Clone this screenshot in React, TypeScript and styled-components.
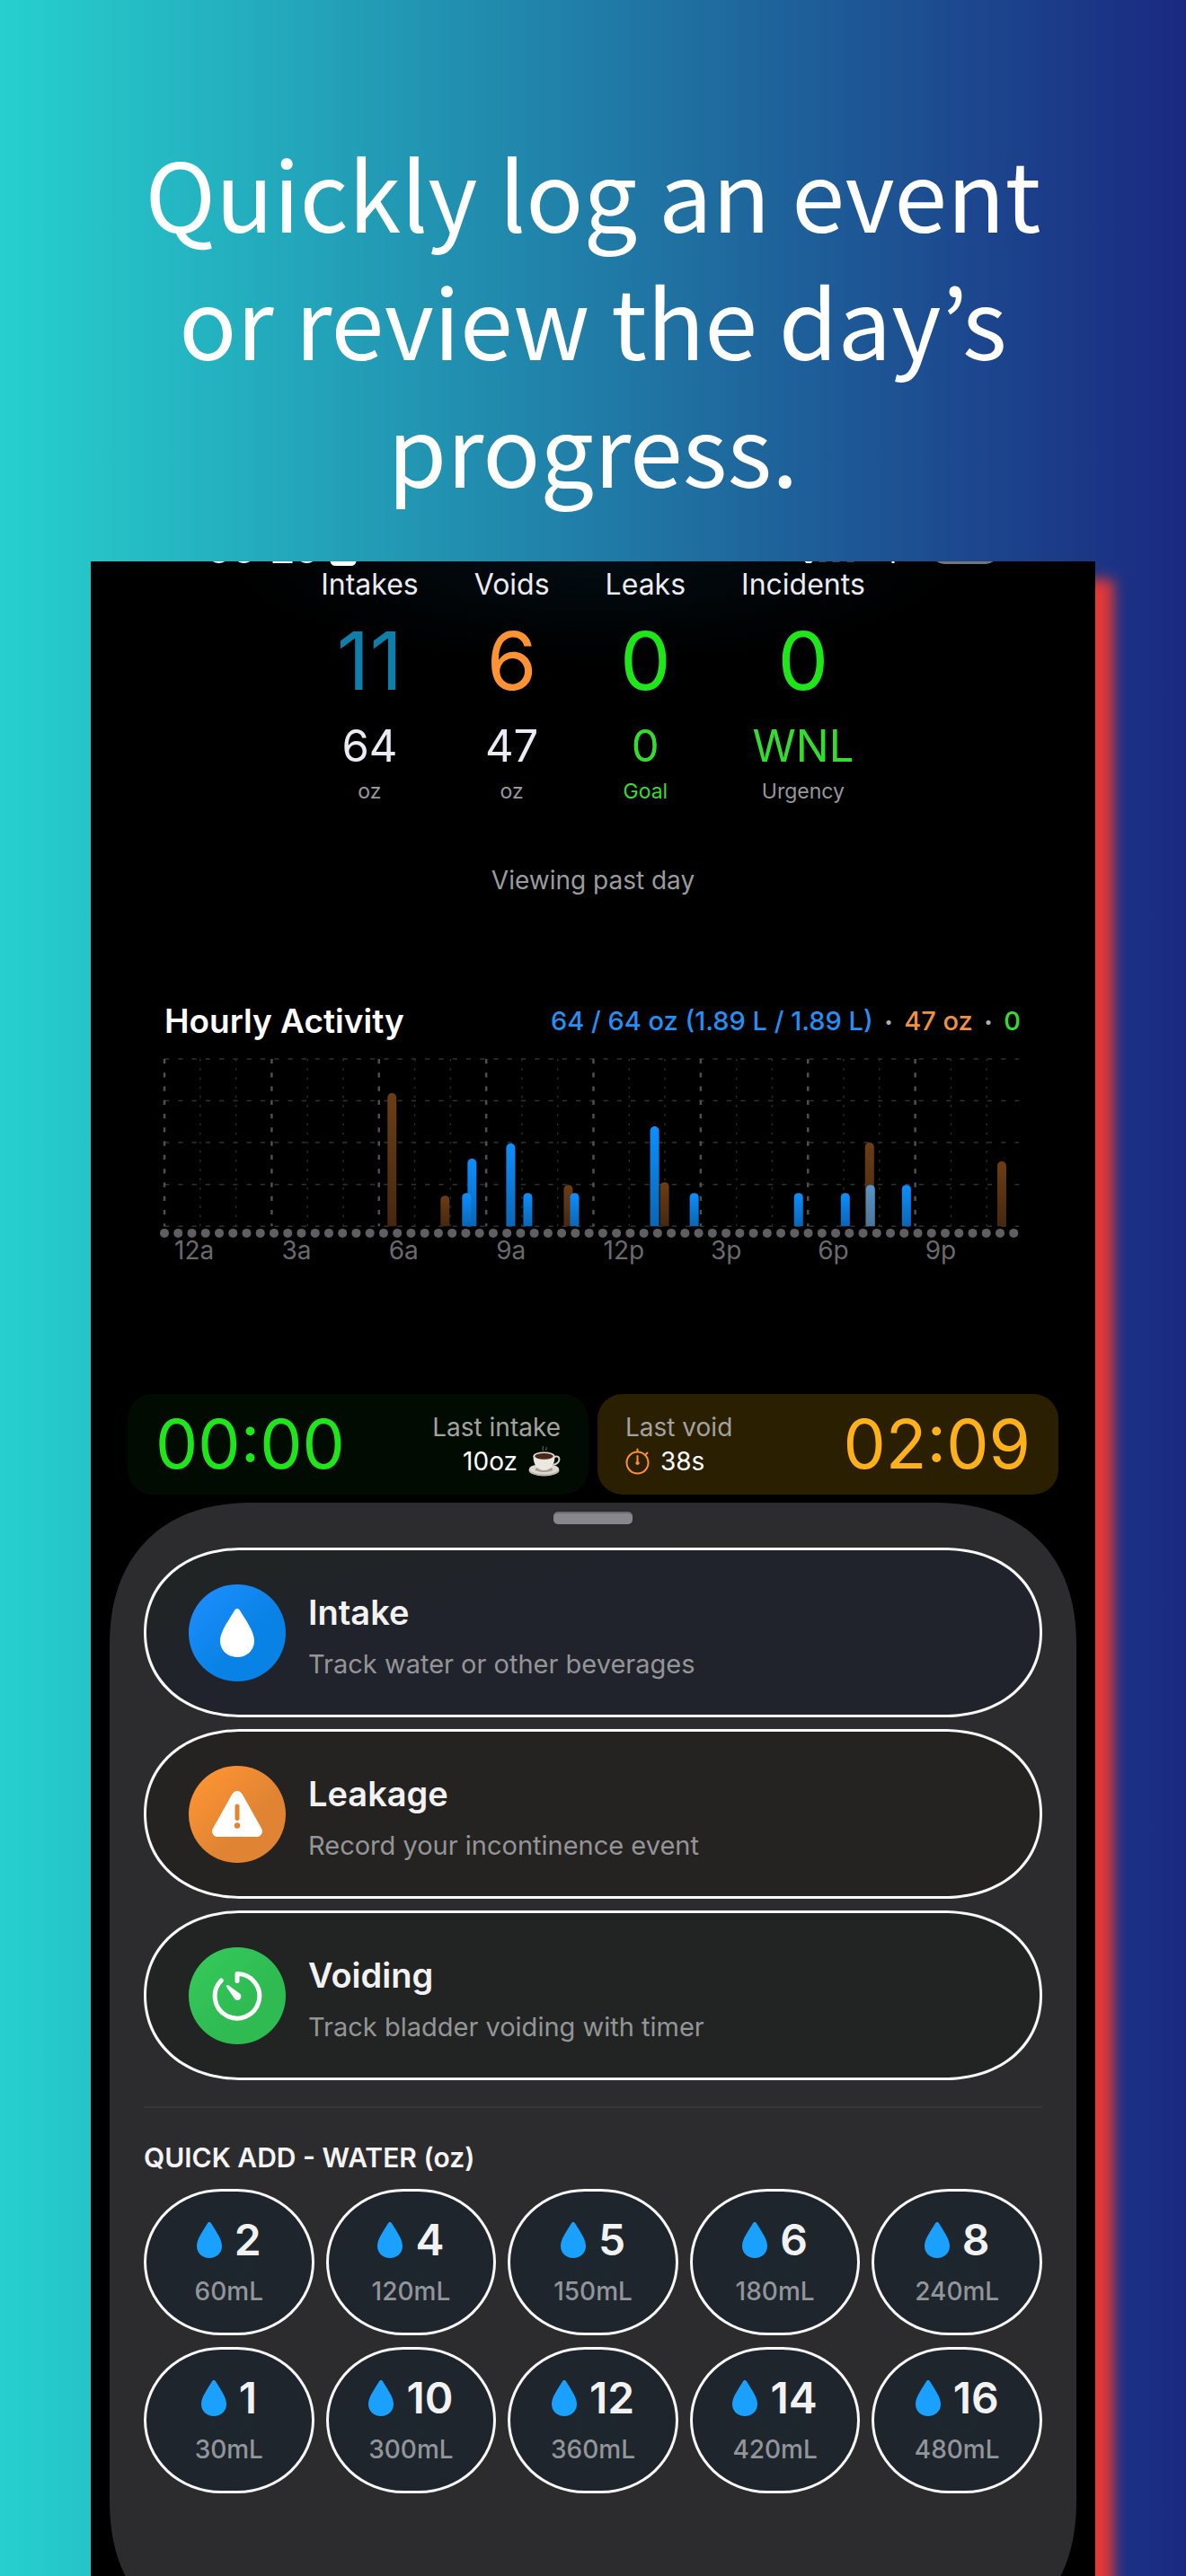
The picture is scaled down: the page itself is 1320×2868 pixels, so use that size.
import React from "react";
import styled, { createGlobalStyle } from "styled-components";

const GlobalStyle = createGlobalStyle`
  *, *::before, *::after { box-sizing: border-box; }
  body { margin: 0; background: #1a2980; }
  button { font: inherit; color: inherit; }
  h1, h2, h3, p { margin: 0; font-weight: inherit; }
`;

const Page = styled.main`
  height: 100vh;
  overflow: hidden;
  padding: 142px 101px 0;
  background: linear-gradient(90deg, #26d0ce, #1a2980);
  font-family: Inter, "Liberation Sans", sans-serif;
  color: #fff;
`;

const Headline = styled.h1`
  padding: 0 40px;
  margin-bottom: 57px;
  text-align: center;
  font-family: "Noto Sans CJK JP", "Noto Sans", sans-serif;
  font-size: 106px;
  font-weight: 400;
  line-height: 142px;
`;

const Phone = styled.section`
  background: radial-gradient(ellipse 400px 110px at 50% 0, #020c12, #000);
  box-shadow: 20px 20px 14px #e53935;
`;

const StatusStrip = styled.svg`
  display: block;
  width: 100%;
  height: 7px;
`;

const Stats = styled.div`
  display: flex;
  justify-content: center;
  gap: 62px;
`;

const Stat = styled.div`
  display: flex;
  flex-direction: column;
  align-items: center;
`;

const StatName = styled.h3`
  font-size: 32px;
  line-height: 38px;
  color: #ebebf2;
`;

const StatCount = styled.p<{ $color: string }>`
  margin: 16px 0 14px;
  font-size: 90px;
  font-weight: 400;
  line-height: 100px;
  color: ${(p) => p.$color};
`;

const StatTotal = styled.p<{ $color: string }>`
  font-size: 49px;
  font-weight: 400;
  line-height: 62px;
  color: ${(p) => p.$color};
`;

const StatUnit = styled.p<{ $color: string }>`
  margin-top: 4px;
  font-size: 23px;
  line-height: 30px;
  color: ${(p) => p.$color};
`;

const Viewing = styled.p`
  margin-top: 66px;
  text-align: center;
  font-size: 28px;
  line-height: 36px;
  color: #9b9b9f;
`;

const Activity = styled.section`
  padding: 0 81px 0 82px;
  margin-top: 117px;
`;

const ActivityHeader = styled.header`
  display: flex;
  align-items: center;
  justify-content: space-between;
  padding-right: 2px;
  margin-bottom: 18px;
`;

const ActivityTitle = styled.h2`
  font-size: 37px;
  font-weight: 600;
  line-height: 44px;
`;

const Summary = styled.p`
  display: flex;
  align-items: center;
  gap: 13px;
  font-size: 29px;
  font-weight: 500;
  line-height: 44px;
`;

const Tint = styled.span<{ $color: string }>`
  color: ${(p) => p.$color};
`;

const Dot = styled.span`
  font-size: 16px;
  color: #b0b0b4;
`;

const Chart = styled.svg`
  display: block;
  width: 100%;
  overflow: visible;
`;

const Hours = styled.div`
  display: grid;
  grid-template-columns: repeat(8, 1fr);
  font-size: 28px;
  line-height: 30px;
  color: #6a6a6e;
`;

const Hour = styled.span`
  padding-left: 11px;
`;

const Timers = styled.div`
  display: grid;
  grid-template-columns: 1fr 1fr;
  gap: 10px;
  padding: 0 41px;
  margin: 145px 0 9px;
`;

const TimerCard = styled.div<{ $bg: string }>`
  display: flex;
  align-items: center;
  justify-content: space-between;
  height: 112px;
  padding: 0 31px;
  border-radius: 28px;
  background: ${(p) => p.$bg};
`;

const Clock = styled.time<{ $color: string }>`
  font-size: 75px;
  font-weight: 400;
  line-height: 84px;
  color: ${(p) => p.$color};
`;

const TimerInfo = styled.div<{ $align: string }>`
  display: flex;
  flex-direction: column;
  align-items: ${(p) => p.$align};
  font-size: 28px;
  line-height: 38px;
`;

const TimerLabel = styled.span`
  color: #a3a29f;
`;

const TimerValue = styled.span`
  display: flex;
  align-items: center;
  gap: 12px;
`;

const Sheet = styled.section`
  margin: 0 21px;
  padding: 10px 38px 167px;
  border-radius: 150px;
  background: #2c2c2e;
  @supports (corner-shape: superellipse(1.2)) {
    border-radius: 160px;
    corner-shape: superellipse(1.2);
  }
`;

const Handle = styled.div`
  width: 88px;
  height: 14px;
  margin: 0 auto 26px;
  border-top: 2px solid #6c6b72;
  border-radius: 5px;
  background: #88878d;
`;

const Actions = styled.div`
  display: grid;
  gap: 13px;
`;

const ActionButton = styled.button<{ $bg: string }>`
  display: flex;
  align-items: center;
  gap: 25px;
  height: 189px;
  padding: 0 47px;
  border: 3px solid #f8f8f8;
  border-radius: 100px / 50%;
  background: ${(p) => p.$bg};
  text-align: left;
  @supports (corner-shape: superellipse(1.1)) {
    border-radius: 110px / 50%;
    corner-shape: superellipse(1.1);
  }
`;

const ActionIcon = styled.span<{ $from: string; $to: string }>`
  display: grid;
  place-items: center;
  width: 108px;
  height: 108px;
  border-radius: 50%;
  background: linear-gradient(135deg, ${(p) => p.$from} 15%, ${(p) => p.$to} 60%);
`;

const ActionText = styled.span`
  display: grid;
  gap: 15px;
  padding-top: 6px;
`;

const ActionTitle = styled.span`
  font-size: 38px;
  font-weight: 600;
  line-height: 50px;
  color: #f2f2f2;
`;

const ActionHint = styled.span`
  font-size: 29px;
  line-height: 36px;
  color: #949597;
`;

const Divider = styled.hr`
  height: 2px;
  margin: 29px 0 37px;
  border: 0;
  background: #363638;
`;

const QuickTitle = styled.h2`
  margin-bottom: 17px;
  font-size: 30px;
  font-weight: 600;
  line-height: 36px;
  color: #f4f4f4;
`;

const QuickGrid = styled.div`
  display: grid;
  grid-template-columns: repeat(5, 1fr);
  gap: 13px;
`;

const QuickButton = styled.button`
  display: flex;
  flex-direction: column;
  align-items: center;
  justify-content: center;
  gap: 15px;
  height: 163px;
  padding: 0;
  border: 3px solid #f8f8f8;
  border-radius: 86px / 50%;
  background: radial-gradient(circle, #1d262e, #20242b);
`;

const QuickAmount = styled.span`
  display: flex;
  align-items: center;
  gap: 14px;
  font-size: 48px;
  font-weight: 600;
  line-height: 50px;
  color: #f2f2f2;
`;

const QuickMetric = styled.span`
  font-size: 28px;
  font-weight: 500;
  line-height: 34px;
  color: #92959a;
`;

const GREEN = "#1ee61a";
const SOFT_GREEN = "#35dc30";
const GREY = "#98989c";

const stats = [
  { name: "Intakes", count: "11", color: "#0e7fab", total: "64", totalColor: "#ebebf5", unit: "oz", unitColor: GREY },
  { name: "Voids", count: "6", color: "#ff9233", total: "47", totalColor: "#ebebf5", unit: "oz", unitColor: GREY },
  { name: "Leaks", count: "0", color: GREEN, total: "0", totalColor: SOFT_GREEN, unit: "Goal", unitColor: SOFT_GREEN },
  { name: "Incidents", count: "0", color: GREEN, total: "WNL", totalColor: SOFT_GREEN, unit: "Urgency", unitColor: GREY },
];

type BarKind = "void" | "intake" | "mixed";
const bars: { x: number; h: number; kind: BarKind }[] = [
  { x: 253, h: 148, kind: "void" },
  { x: 312, h: 34, kind: "void" },
  { x: 342, h: 75, kind: "intake" },
  { x: 336, h: 37, kind: "intake" },
  { x: 385, h: 92, kind: "intake" },
  { x: 404, h: 37, kind: "intake" },
  { x: 449, h: 46, kind: "void" },
  { x: 456, h: 37, kind: "intake" },
  { x: 545, h: 111, kind: "intake" },
  { x: 556, h: 49, kind: "void" },
  { x: 589, h: 37, kind: "intake" },
  { x: 705, h: 37, kind: "intake" },
  { x: 757, h: 37, kind: "intake" },
  { x: 784, h: 93, kind: "void" },
  { x: 785, h: 46, kind: "mixed" },
  { x: 825, h: 46, kind: "intake" },
  { x: 931, h: 72, kind: "void" },
];

const BASE = 188;
const barPath = (x: number, h: number) =>
  `M${x - 5} ${BASE}V${BASE - h + 5}a5 5 0 0 1 10 0V${BASE}z`;

const hours = ["12a", "3a", "6a", "9a", "12p", "3p", "6p", "9p"];

const quick = [
  ["2", "60mL"], ["4", "120mL"], ["5", "150mL"], ["6", "180mL"], ["8", "240mL"],
  ["1", "30mL"], ["10", "300mL"], ["12", "360mL"], ["14", "420mL"], ["16", "480mL"],
];

function Drop({ width, height, color }: { width: number; height: number; color: string }) {
  return (
    <svg width={width} height={height} viewBox="0 0 28 40" preserveAspectRatio="none" aria-hidden="true">
      <path d="M14 0c1 0 1.700.6 2.300 1.700C20.500 9 28 18.500 28 26.500 28 34.500 22 40 14 40S0 34.500 0 26.500C0 18.500 7.500 9 11.700 1.700 12.300.6 13 0 14 0z" fill={color} />
    </svg>
  );
}

function Warning() {
  return (
    <svg width="56" height="51" viewBox="0 0 56 51" aria-hidden="true">
      <path d="M22.500 3.200a6.300 6.300 0 0 1 11 0l21.600 38.600c2.300 4.300-.6 9.200-5.500 9.200H6.400C1.500 51-1.400 46.100.9 41.800z" fill="#fff" />
      <path d="M28 17v13.500" stroke="#e28634" strokeWidth="5" strokeLinecap="round" />
      <circle cx="28" cy="38.500" r="3.200" fill="#e28634" />
    </svg>
  );
}

function TimerDial() {
  return (
    <svg width="56" height="56" viewBox="0 0 56 56" fill="none" aria-hidden="true">
      <path d="M28 11.500V3.500A24.800 24.800 0 1 1 10.200 11" stroke="#fff" strokeWidth="5" strokeLinecap="round" strokeLinejoin="round" />
      <path d="M16.300 16.300c.8-.7 1.500-.4 2.200.1l12.300 9.200a4.100 4.100 0 1 1-5.800 5.700L16.200 18.300c-.5-.7-.6-1.400.1-2z" fill="#fff" />
    </svg>
  );
}

function Stopwatch() {
  return (
    <svg width="27" height="30" viewBox="0 0 27 30" fill="none" stroke="#ff8f35" strokeWidth="2" strokeLinecap="round" aria-hidden="true">
      <circle cx="13.500" cy="16.500" r="12" />
      <path d="M13.500 4V1.500M23 7l1.500-1.500M13.500 9v8" />
      <circle cx="13.500" cy="17" r="1.600" fill="#ff8f35" strokeWidth="1" />
    </svg>
  );
}

function Coffee() {
  return (
    <svg width="36" height="34" viewBox="0 0 36 34" aria-hidden="true">
      <path d="M17 5c-3-2 1-2-1-5M20 5c-1-2 1-2 0-4" stroke="#55585a" strokeWidth="1.200" fill="none" />
      <ellipse cx="17.500" cy="27" rx="17" ry="6.500" fill="#bdb9af" />
      <ellipse cx="17.500" cy="25.500" rx="16.500" ry="5.500" fill="#dedad1" />
      <ellipse cx="17.500" cy="26" rx="10" ry="3" fill="#a39e94" />
      <path d="M29 12c7-3 8 7-1.500 9" stroke="#d6d2c9" strokeWidth="2" fill="none" />
      <path d="M5.500 11c0 9 4 16 12 16s12-7 12-16z" fill="#ebe8e1" />
      <ellipse cx="17.500" cy="11" rx="12" ry="4.500" fill="#e4e0d8" />
      <ellipse cx="17.500" cy="11.300" rx="10.300" ry="3.400" fill="#4a2519" />
    </svg>
  );
}

function ActivityChart() {
  return (
    <Chart viewBox="0 0 954 200" role="img" aria-label="Hourly activity bars">
      <defs>
        <linearGradient id="void" x1="0" y1="0" x2="0" y2="1">
          <stop offset="0" stopColor="#6c3d15" />
          <stop offset="1" stopColor="#46280f" />
        </linearGradient>
        <linearGradient id="intake" x1="0" y1="0" x2="0" y2="1">
          <stop offset="0" stopColor="#0d8fff" />
          <stop offset="1" stopColor="#0a66b5" />
        </linearGradient>
        <linearGradient id="mixed" x1="0" y1="0" x2="0" y2="1">
          <stop offset="0" stopColor="#5795c8" />
          <stop offset="1" stopColor="#4c7697" />
        </linearGradient>
      </defs>
      {[0, 1, 2, 3, 4].map((i) => (
        <path key={i} d={`M0 ${2 + i * 46.5}H950`} stroke="#303032" strokeWidth="1.500" strokeDasharray="5.250 10" />
      ))}
      {Array.from({ length: 24 }, (_, i) => {
        const major = i % 3 === 0;
        return (
          <path
            key={i}
            d={`M${i * 39.75} 2V${BASE}`}
            stroke={major ? "#4f4f52" : "#29292b"}
            strokeWidth={major ? 2.5 : 1.5}
            strokeDasharray={major ? "5.250 10" : "2.600 7.600"}
          />
        );
      })}
      {bars.map((b, i) => (
        <path key={i} d={barPath(b.x, b.h)} fill={`url(#${b.kind})`} />
      ))}
      {Array.from({ length: 63 }, (_, i) => (
        <circle key={i} cx={i * 15.23} cy="195.700" r="5" fill="#5f5f62" />
      ))}
    </Chart>
  );
}

export default function App() {
  return (
    <Page>
      <GlobalStyle />
      <Headline>Quickly log an event or review the day’s progress.</Headline>
      <Phone>
        <StatusStrip viewBox="0 0 1117 7" preserveAspectRatio="xMidYMin meet" aria-hidden="true">
          <path d="M135 0q7 4 14 0zM163 0q7 4 14 0zM202 0h22v2h-22zM233 0q7 4 14 0z" fill="#fff" />
          <path d="M266 0h29q-1 5-6 5h-17q-5 0-6-5z" fill="#fff" />
          <path d="M794 0h9l-2 2h-5zM891 0h3v2h-3z" fill="#fff" />
          <path d="M810 0h8v1h-8zM825 0h8v1h-8zM841 0h8v1h-8z" fill="#444" />
          <path d="M941 0h63q-4 3-8 3h-47q-4 0-8-3z" fill="#757575" />
        </StatusStrip>
        <Stats>
          {stats.map((s) => (
            <Stat key={s.name}>
              <StatName>{s.name}</StatName>
              <StatCount $color={s.color}>{s.count}</StatCount>
              <StatTotal $color={s.totalColor}>{s.total}</StatTotal>
              <StatUnit $color={s.unitColor}>{s.unit}</StatUnit>
            </Stat>
          ))}
        </Stats>
        <Viewing>Viewing past day</Viewing>

        <Activity>
          <ActivityHeader>
            <ActivityTitle>Hourly Activity</ActivityTitle>
            <Summary>
              <Tint $color="#2490f5">64 / 64 oz (1.89 L / 1.89 L)</Tint>
              <Dot>•</Dot>
              <Tint $color="#f0913f">47 oz</Tint>
              <Dot>•</Dot>
              <Tint $color={SOFT_GREEN}>0</Tint>
            </Summary>
          </ActivityHeader>
          <ActivityChart />
          <Hours>
            {hours.map((h) => (
              <Hour key={h}>{h}</Hour>
            ))}
          </Hours>
        </Activity>

        <Timers>
          <TimerCard $bg="#010b02">
            <Clock $color={GREEN}>00:00</Clock>
            <TimerInfo $align="flex-end">
              <TimerLabel>Last intake</TimerLabel>
              <TimerValue>10oz <Coffee /></TimerValue>
            </TimerInfo>
          </TimerCard>
          <TimerCard $bg="#2b1f02">
            <TimerInfo $align="flex-start">
              <TimerLabel>Last void</TimerLabel>
              <TimerValue><Stopwatch /> 38s</TimerValue>
            </TimerInfo>
            <Clock $color="#ffb11a">02:09</Clock>
          </TimerCard>
        </Timers>

        <Sheet>
          <Handle />
          <Actions>
            <ActionButton type="button" $bg="linear-gradient(165deg, #202425 12%, #20232b 35%)">
              <ActionIcon $from="#1a8cfa" $to="#0882e4"><Drop width={38} height={54} color="#fff" /></ActionIcon>
              <ActionText>
                <ActionTitle>Intake</ActionTitle>
                <ActionHint>Track water or other beverages</ActionHint>
              </ActionText>
            </ActionButton>
            <ActionButton type="button" $bg="#252321">
              <ActionIcon $from="#fb9233" $to="#e08433"><Warning /></ActionIcon>
              <ActionText>
                <ActionTitle>Leakage</ActionTitle>
                <ActionHint>Record your incontinence event</ActionHint>
              </ActionText>
            </ActionButton>
            <ActionButton type="button" $bg="#222423">
              <ActionIcon $from="#34c759" $to="#2fbb52"><TimerDial /></ActionIcon>
              <ActionText>
                <ActionTitle>Voiding</ActionTitle>
                <ActionHint>Track bladder voiding with timer</ActionHint>
              </ActionText>
            </ActionButton>
          </Actions>
          <Divider />
          <QuickTitle>QUICK ADD - WATER (oz)</QuickTitle>
          <QuickGrid>
            {quick.map(([oz, ml]) => (
              <QuickButton key={oz} type="button">
                <QuickAmount><Drop width={28} height={40} color="#1aa1ff" />{oz}</QuickAmount>
                <QuickMetric>{ml}</QuickMetric>
              </QuickButton>
            ))}
          </QuickGrid>
        </Sheet>
      </Phone>
    </Page>
  );
}
